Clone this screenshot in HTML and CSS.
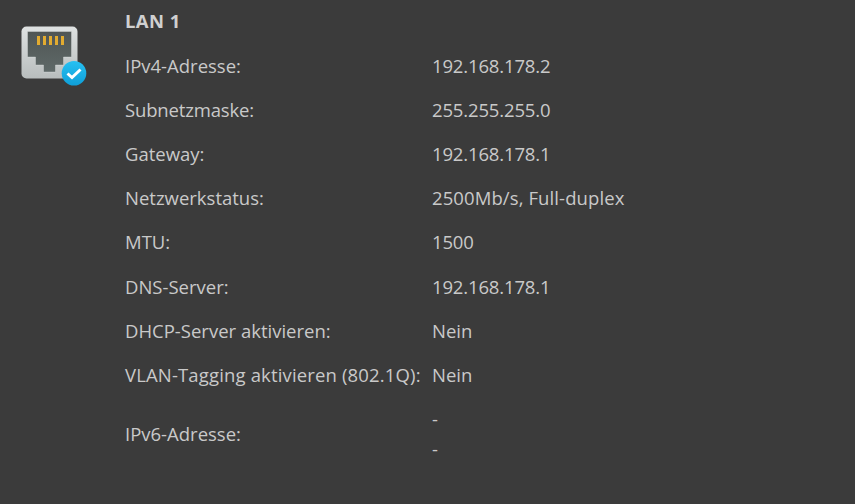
FILE: index.html
```html
<!DOCTYPE html>
<html lang="de">
<head>
<meta charset="utf-8">
<title>LAN 1</title>
<link rel="stylesheet" href="styles.css">
</head>
<body>
<main class="panel">
  <div class="icon-col">
    <svg class="lan-icon" width="70" height="66" viewBox="0 0 70 66">
      <defs>
        <linearGradient id="body" x1="0" y1="0" x2="0" y2="1">
          <stop offset="0" stop-color="#dfe2e2"/>
          <stop offset="1" stop-color="#b8bdbd"/>
        </linearGradient>
        <linearGradient id="port" x1="0" y1="0" x2="0" y2="1">
          <stop offset="0" stop-color="#4f5554"/>
          <stop offset="1" stop-color="#5f6968"/>
        </linearGradient>
        <linearGradient id="badge" x1="0" y1="0" x2="0" y2="1">
          <stop offset="0" stop-color="#27c0f2"/>
          <stop offset="1" stop-color="#0f9fd8"/>
        </linearGradient>
      </defs>
      <rect x="0.500" y="0.500" width="56" height="52" rx="5" fill="url(#body)"/>
      <path d="M6.500 5.500h44v25.500h-8v8h-8v7H22.500v-7H14.500v-8H6.500z" fill="url(#port)" stroke="#e8ebeb" stroke-opacity="0.35"/>
      <g fill="#e2ab30">
        <rect x="16" y="10" width="3" height="9"/>
        <rect x="22" y="10" width="3" height="9"/>
        <rect x="28" y="10" width="3" height="9"/>
        <rect x="34" y="10" width="3" height="9"/>
        <rect x="40" y="10" width="3" height="9"/>
      </g>
      <circle cx="53" cy="47.300" r="12.300" fill="url(#badge)"/>
      <path d="M46.500 47.500l4.500 4l8.500-8" fill="none" stroke="#fff" stroke-width="3"/>
    </svg>
  </div>
  <div class="details">
    <h2 class="title">LAN 1</h2>
    <dl class="rows">
      <div class="row"><dt>IPv4-Adresse:</dt><dd class="num">192.168.178.2</dd></div>
      <div class="row"><dt class="tight">Subnetzmaske:</dt><dd class="num">255.255.255.0</dd></div>
      <div class="row"><dt>Gateway:</dt><dd class="num">192.168.178.1</dd></div>
      <div class="row"><dt>Netzwerkstatus:</dt><dd class="wide">2500Mb/s, Full-duplex</dd></div>
      <div class="row"><dt>MTU:</dt><dd class="num">1500</dd></div>
      <div class="row"><dt>DNS-Server:</dt><dd class="num">192.168.178.1</dd></div>
      <div class="row"><dt>DHCP-Server aktivieren:</dt><dd>Nein</dd></div>
      <div class="row"><dt class="long">VLAN-Tagging aktivieren (802.1Q):</dt><dd>Nein</dd></div>
      <div class="row row-double"><dt>IPv6-Adresse:</dt><dd><span>-</span><span>-</span></dd></div>
    </dl>
  </div>
</main>
</body>
</html>
```
FILE: styles.css
```css
html, body {
  margin: 0;
  height: 100%;
  background: #3b3b3b;
}
body {
  font-family: "Open Sans", "Noto Sans", sans-serif;
  font-size: 18.5px;
  color: #c9c9c9;
  overflow: hidden;
}
.panel {
  display: flex;
}
.icon-col {
  width: 125px;
  flex: none;
  padding: 26px 0 0 21px;
  box-sizing: border-box;
}
.lan-icon { display: block; }
.title {
  margin: 0;
  padding-top: 9px;
  height: 34.6px;
  line-height: 24px;
  font-size: 18.5px;
  font-weight: 700;
  letter-spacing: 0.4px;
  color: #d0d0d0;
}
.rows { margin: 0; }
.row {
  display: grid;
  grid-template-columns: 307px auto;
  align-items: center;
  height: 44.2px;
  line-height: 24px;
}
.row dt, .row dd { margin: 0; white-space: nowrap; }
.num { letter-spacing: -0.15px; }
.long { letter-spacing: 0.15px; }
.tight { letter-spacing: -0.15px; }
.wide { letter-spacing: 0.1px; }
.row-double { height: 74px; }
.row-double dd {
  display: flex;
  flex-direction: column;
  gap: 6px;
}
```
